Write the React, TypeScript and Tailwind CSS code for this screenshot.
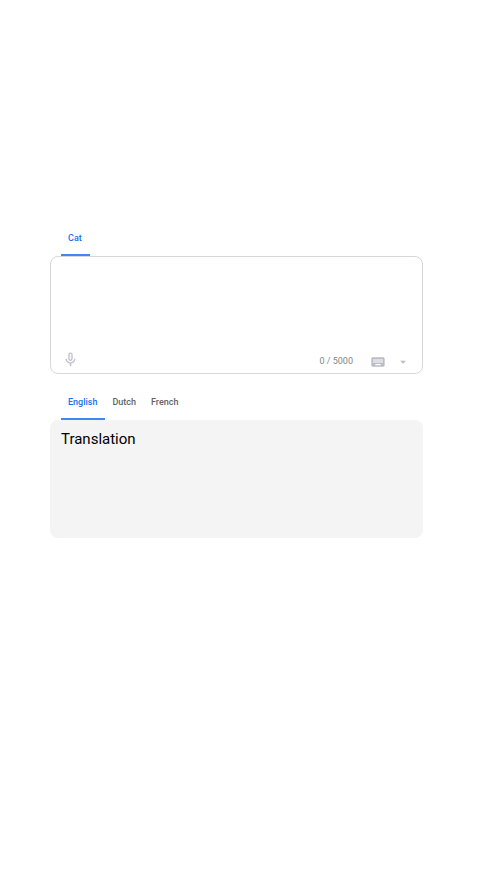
import { useState } from "react";
import { MdArrowDropDown, MdKeyboard, MdMicNone } from "react-icons/md";

type TabsProps = {
  label: string;
  names: string[];
  active: string;
  onSelect: (name: string) => void;
};

function Tabs({ label, names, active, onSelect }: TabsProps) {
  return (
    <div role="tablist" aria-label={label} className="flex h-9 pl-[11px] text-[9px] font-medium">
      {names.map((name) => (
        <button
          key={name}
          type="button"
          role="tab"
          aria-selected={name === active}
          onClick={() => onSelect(name)}
          className={
            name === active
              ? "border-b-2 border-[#4285f4] pt-[3px] pr-2 pl-[7px] text-[#1a6fe8]"
              : "border-b-2 border-transparent pt-[3px] pr-2 pl-[7px] text-[#5f6368]"
          }
        >
          {name}
        </button>
      ))}
    </div>
  );
}

export default function App() {
  const [text, setText] = useState("");
  const [target, setTarget] = useState("English");

  return (
    <main className="flex min-h-screen flex-col gap-[10px] bg-white pt-[220px] pr-[57px] pb-10 pl-[50px] font-['Roboto',sans-serif]">
      <section>
        <Tabs label="Source language" names={["Cat"]} active="Cat" onSelect={() => {}} />
        <div className="flex flex-col rounded-lg border border-[#d8d8d8]">
          <textarea
            aria-label="Source text"
            maxLength={5000}
            value={text}
            onChange={(event) => setText(event.target.value)}
            className="h-[88px] w-full resize-none px-[11px] py-[7px] text-[15px] leading-6 text-black outline-none"
          />
          <div className="flex h-7 items-center pr-3 pl-[11px] text-[#bcbcc8]">
            <button type="button" aria-label="Speak">
              <MdMicNone className="size-[17px]" />
            </button>
            <span className="ml-auto pt-[6px] text-[9px] text-[#85858a]">{text.length} / 5000</span>
            <button type="button" aria-label="Keyboard" className="ml-[17px] pt-[6px]">
              <MdKeyboard className="size-4" />
            </button>
            <button type="button" aria-label="Input tools" className="ml-[10px] pt-[6px]">
              <MdArrowDropDown className="size-[14px]" />
            </button>
          </div>
        </div>
      </section>

      <section>
        <Tabs
          label="Target language"
          names={["English", "Dutch", "French"]}
          active={target}
          onSelect={setTarget}
        />
        <div className="h-[118px] rounded-lg bg-[#f4f4f4] px-[11px] py-[7px] text-[15px] leading-6 text-black">
          Translation
        </div>
      </section>
    </main>
  );
}
